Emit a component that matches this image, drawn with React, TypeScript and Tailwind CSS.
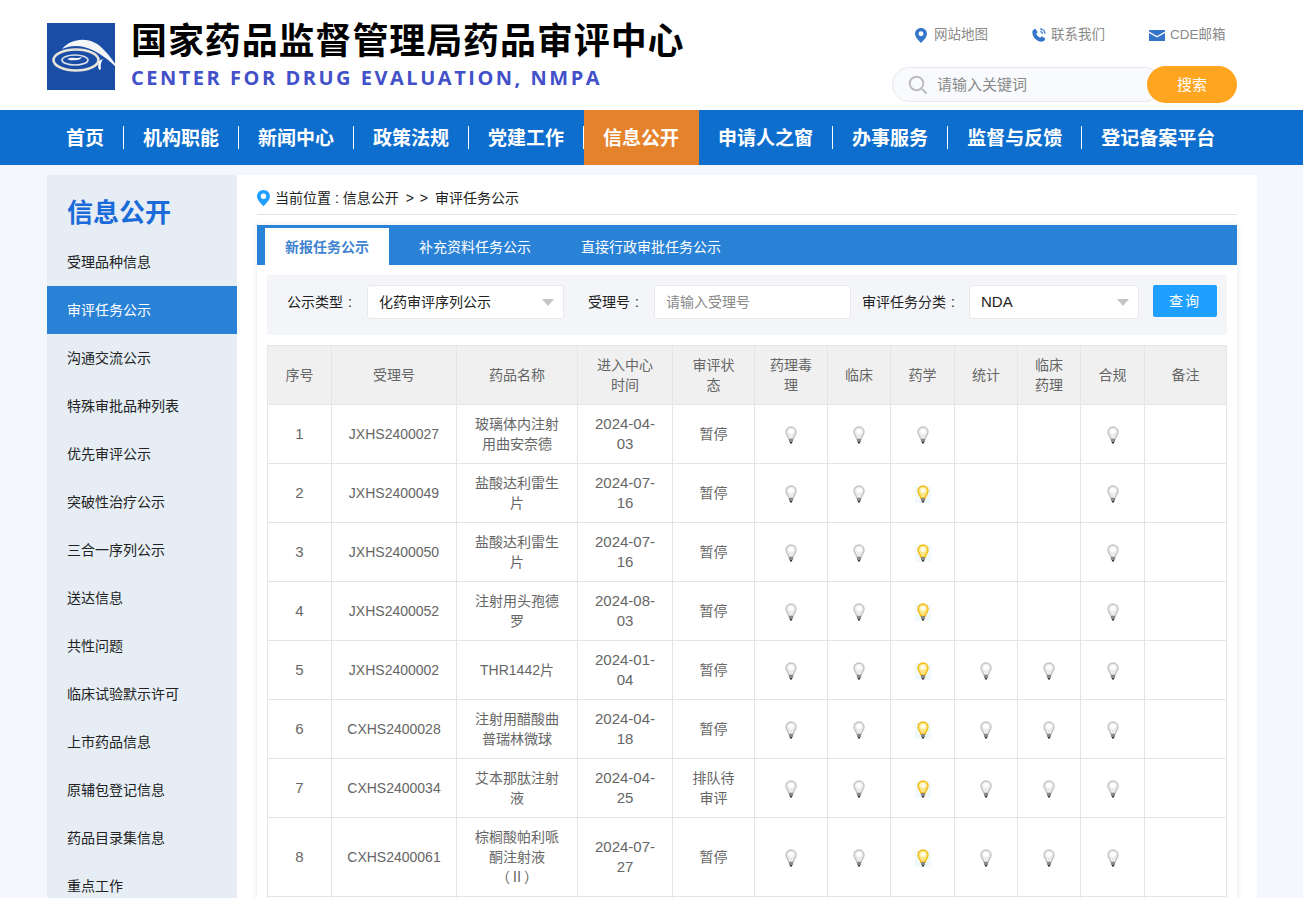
import React from "react";

const nav = ["首页", "机构职能", "新闻中心", "政策法规", "党建工作", "信息公开", "申请人之窗", "办事服务", "监督与反馈", "登记备案平台"];
const side = ["受理品种信息", "审评任务公示", "沟通交流公示", "特殊审批品种列表", "优先审评公示", "突破性治疗公示", "三合一序列公示", "送达信息", "共性问题", "临床试验默示许可", "上市药品信息", "原辅包登记信息", "药品目录集信息", "重点工作"];

type Row = { n: number; id: string; name: React.ReactNode; date: string; st: string; b: number[]; h?: boolean };
const rows: Row[] = [
  { n: 1, id: "JXHS2400027", name: "玻璃体内注射用曲安奈德", date: "2024-04-03", st: "暂停", b: [1, 1, 1, 0, 0, 1] },
  { n: 2, id: "JXHS2400049", name: "盐酸达利雷生片", date: "2024-07-16", st: "暂停", b: [1, 1, 2, 0, 0, 1] },
  { n: 3, id: "JXHS2400050", name: "盐酸达利雷生片", date: "2024-07-16", st: "暂停", b: [1, 1, 2, 0, 0, 1] },
  { n: 4, id: "JXHS2400052", name: "注射用头孢德罗", date: "2024-08-03", st: "暂停", b: [1, 1, 2, 0, 0, 1] },
  { n: 5, id: "JXHS2400002", name: "THR1442片", date: "2024-01-04", st: "暂停", b: [1, 1, 2, 1, 1, 1] },
  { n: 6, id: "CXHS2400028", name: "注射用醋酸曲普瑞林微球", date: "2024-04-18", st: "暂停", b: [1, 1, 2, 1, 1, 1] },
  { n: 7, id: "CXHS2400034", name: "艾本那肽注射液", date: "2024-04-25", st: "排队待审评", b: [1, 1, 2, 1, 1, 1] },
  { n: 8, id: "CXHS2400061", name: <>棕榈酸帕利哌酮注射液<br />（Ⅱ）</>, date: "2024-07-27", st: "暂停", b: [1, 1, 2, 1, 1, 1], h: true },
];

function Bulb({ on }: { on: boolean }) {
  const glass = on ? "#f2bd12" : "#c4c4c4";
  const inner = on ? "#fbe58a" : "#ececec";
  return (
    <svg width="16" height="18" viewBox="0 0 16 18" className="block mx-auto translate-y-[1px]">
      {on ? <rect x="0" y="1" width="16" height="17" fill="#f1f9fc" /> : null}
      <g transform="translate(1.500 0) scale(0.93 1)">
        <path d="M7 1C3.900 1 1.600 3.200 1.600 6c0 2.400 1.800 3.600 2.500 5.600.2.600.3 1 .4 1.400h5c.1-.4.2-.8.4-1.400C10.600 9.600 12.400 8.400 12.400 6 12.400 3.200 10.100 1 7 1z" fill={inner} stroke={glass} strokeWidth="1.500" />
        <ellipse cx="7" cy="5.500" rx="2.800" ry="2.400" fill={on ? "#fffbe6" : "#ffffff"} />
        <rect x="4.800" y="13" width="4.400" height="3" fill="#8a8a8a" />
        <rect x="5.800" y="16" width="2.400" height="1.500" fill="#333333" />
      </g>
    </svg>
  );
}

function Pin({ color, size = 14 }: { color: string; size?: number }) {
  return (
    <svg width={size} height={size * 1.25} viewBox="0 0 16 20" className="block shrink-0">
      <path d="M8 0C3.600 0 0 3.500 0 7.800 0 13.200 8 20 8 20s8-6.800 8-12.200C16 3.500 12.400 0 8 0zm0 11a3.300 3.300 0 1 1 0-6.600A3.300 3.300 0 0 1 8 11z" fill={color} />
    </svg>
  );
}

function Caret() {
  return <span className="ml-auto w-0 h-0 border-l-[6px] border-r-[6px] border-t-[7px] border-l-transparent border-r-transparent border-t-[#c4c4c4]" />;
}

const colClasses = ["w-[64px]", "w-[125px]", "w-[121px]", "w-[95px]", "w-[82px]", "w-[73px]", "w-[63px]", "w-[64px]", "w-[63px]", "w-[63px]", "w-[64px]", "w-[82px]"];
const heads = ["序号", "受理号", "药品名称", "进入中心时间", "审评状态", "药理毒理", "临床", "药学", "统计", "临床药理", "合规", "备注"];

export default function App() {
  return (
    <div className="h-[898px] overflow-hidden bg-[#f4f8fe] font-['Liberation_Sans','Noto_Sans_CJK_SC',sans-serif] text-[14px]">
      <header className="h-[110px] bg-white flex pl-[47px] pr-[66px]">
        <div className="mt-[23px] w-[68px] h-[67px] bg-[#1a4ea6] shrink-0">
          <svg width="68" height="67" viewBox="0 0 68 67" className="block overflow-visible">
            <path d="M15 26C24 15 44 12 57 27c6 6 10 12 15 20C62 37 50 27 37 24c-8-2-15-1-22 2z" fill="#f4f5f6" />
            <ellipse cx="29" cy="37" rx="22.500" ry="10.500" fill="none" stroke="#e8e4da" strokeWidth="2.600" />
            <ellipse cx="28" cy="37" rx="13" ry="5" fill="none" stroke="#dfe3ea" strokeWidth="1.600" />
            <path d="M20 36c4-2 8-1 11-1l4-1c-1 2-3 3-5 3-3 0-7 1-10-1z" fill="#f4f5f6" />
            <path d="M56 36c-4 1-6 5-4 11l2-1c-1-4 0-7 2-10z" fill="#ffffff" />
          </svg>
        </div>
        <div className="ml-[16px] shrink-0">
          <div className="mt-[19px] text-[36px] leading-[46px] font-bold tracking-[0.900px] text-black whitespace-nowrap">国家药品监督管理局药品审评中心</div>
          <div className="mt-[1px] text-[20px] leading-[24px] font-bold tracking-[2.520px] text-[#4250c9] whitespace-nowrap font-['Open_Sans',sans-serif]">CENTER FOR DRUG EVALUATION, NMPA</div>
        </div>
        <div className="ml-auto w-[345px] shrink-0">
          <div className="mt-[26px] h-[18px] flex items-center text-[13.500px] text-[#8a8a8a]">
            <span className="ml-[23px]"><Pin color="#3575c9" size={12} /></span>
            <span className="ml-[7px] w-[60px] whitespace-nowrap">网站地图</span>
            <svg width="16" height="16" viewBox="0 0 24 24" className="ml-[37px] block shrink-0">
              <path d="M6.600 2.500 10 8l-2.200 2.300c1 2.500 3.400 5 5.900 5.900L16 14l5.500 3.400c-.5 2.800-2.500 4.600-5 4.600C8.500 22 2 15.500 2 7.500c0-2.500 2-4.500 4.600-5z" fill="#3575c9" />
              <path d="M14 3a7 7 0 0 1 7 7M14 7a3 3 0 0 1 3 3" fill="none" stroke="#3575c9" strokeWidth="2" />
            </svg>
            <span className="ml-[4px] w-[54px] whitespace-nowrap">联系我们</span>
            <svg width="16" height="12" viewBox="0 0 16 12" className="ml-[44px] block shrink-0">
              <path d="M0 1h16v1.500L8 7 0 2.500zM0 4l8 4.500L16 4v8H0z" fill="#3575c9" />
            </svg>
            <span className="ml-[5px] whitespace-nowrap">CDE邮箱</span>
          </div>
          <div className="mt-[22px] relative h-[37px]">
            <div className="absolute left-0 top-[1px] w-[270px] h-[35px] rounded-full bg-[#f8fafd] border border-[#e6e8ec] flex items-center pl-[15px]">
              <svg width="20" height="20" viewBox="0 0 20 20" className="block shrink-0">
                <circle cx="8.500" cy="8.500" r="6.800" fill="none" stroke="#bdbdbd" strokeWidth="2" />
                <path d="M14 14l4.500 4.500" stroke="#bdbdbd" strokeWidth="2" />
              </svg>
              <span className="ml-[9px] pt-[2px] text-[15px] text-[#8a8a8a]">请输入关键词</span>
            </div>
            <div className="absolute right-0 top-0 w-[90px] h-[37px] pt-[2px] rounded-full bg-[#ffa520] text-[15px] text-white flex items-center justify-center">搜索</div>
          </div>
        </div>
      </header>

      <nav className="h-[55px] bg-[#0d6ecd] flex pl-[47px]">
        {nav.map((t, i) => (
          <div key={t} className={i === 5 ? "h-full bg-[#e5832c] flex items-center" : "h-full flex items-center"}>
            <span className={i === 9 ? "px-[19px] text-[19px] leading-[23px] font-bold text-white" : i === 5 ? "px-[19px] text-[19px] leading-[23px] font-bold text-white border-r border-transparent" : "px-[19px] text-[19px] leading-[23px] font-bold text-white border-r border-white"}>
              <span className="block translate-y-[1px]">{t}</span>
            </span>
          </div>
        ))}
      </nav>

      <div className="mt-[10px] mx-[47px] flex">
        <aside className="w-[190px] shrink-0 bg-[#e6edf5]">
          <div className="h-[63px] pl-[20px] pt-[18px] text-[26px] leading-[40px] font-bold text-[#1a6ad9]">信息公开</div>
          {side.map((t, i) => (
            <div key={t} className={i === 1 ? "h-[48px] pl-[20px] flex items-center bg-[#2a82d7] text-white" : "h-[48px] pl-[20px] flex items-center text-[#222222]"}>{t}</div>
          ))}
        </aside>
        <main className="w-[1020px] h-[800px] bg-white px-[20px]">
          <div className="h-[40px] border-b border-[#e5e5e5] flex items-center text-[14px] text-[#222222] pt-[7px]">
            <Pin color="#1f9fff" size={13} />
            <span className="ml-[5px]">当前位置 : 信息公开</span>
            <span className="ml-[7px]">&gt;</span>
            <span className="ml-[6px]">&gt;</span>
            <span className="ml-[7px]">审评任务公示</span>
          </div>
          <div className="mt-[10px] shadow-[0_0_6px_rgba(60,100,170,0.15)] h-[760px]">
            <div className="h-[40px] bg-[#2a82d7] flex items-end pl-[8px] text-[14px] text-white">
              <div className="h-[37px] pt-[2px] w-[124px] bg-white text-[#3f83d0] font-bold flex items-center justify-center">新报任务公示</div>
              <div className="h-[37px] pt-[2px] ml-[30px] flex items-center">补充资料任务公示</div>
              <div className="h-[37px] pt-[2px] ml-[50px] flex items-center">直接行政审批任务公示</div>
            </div>
            <div className="px-[10px] pt-[10px]">
              <div className="h-[60px] bg-[#f3f5f9] flex items-start pt-[10px] pl-[20px] text-[#222222]">
                <span className="h-[34px] w-[80px] flex items-center whitespace-nowrap">公示类型<span className="ml-[5px]">:</span></span>
                <div className="w-[197px] h-[34px] bg-white border border-[#e8e8e8] rounded-[3px] flex items-center pl-[11px] pr-[9px]">化药审评序列公示<Caret /></div>
                <span className="ml-[24px] h-[34px] w-[66px] flex items-center whitespace-nowrap">受理号<span className="ml-[5px]">:</span></span>
                <div className="w-[197px] h-[34px] bg-white border border-[#e8e8e8] rounded-[3px] flex items-center pl-[11px] text-[#8a8a8a]">请输入受理号</div>
                <span className="ml-[11px] h-[34px] w-[107px] flex items-center whitespace-nowrap">审评任务分类<span className="ml-[5px]">:</span></span>
                <div className="w-[170px] h-[34px] bg-white border border-[#e8e8e8] rounded-[3px] flex items-center pl-[11px] pr-[9px] text-[15px]">NDA<Caret /></div>
                <div className="ml-[14px] w-[64px] h-[32px] bg-[#1f9fff] rounded-[2px] text-white flex items-center justify-center tracking-[2px]">查询</div>
              </div>
              <table className="mt-[10px] w-[960px] table-fixed border-collapse text-[#666666] text-center leading-[20px]">
                <colgroup>
                  {colClasses.map((c, i) => <col key={i} className={c} />)}
                </colgroup>
                <thead>
                  <tr className="bg-[#f0f0f0]">
                    {heads.map((h) => <th key={h} className="h-[59px] px-[15px] border border-[#e5e5e5] font-normal">{h}</th>)}
                  </tr>
                </thead>
                <tbody>
                  {rows.map((r) => (
                    <tr key={r.n}>
                      <td className={r.h ? "h-[79px] px-[15px] border border-[#e5e5e5] text-[15px]" : "h-[59px] px-[15px] border border-[#e5e5e5] text-[15px]"}>{r.n}</td>
                      <td className="px-[10px] border border-[#e5e5e5]">{r.id}</td>
                      <td className="px-[15px] border border-[#e5e5e5]">{r.name}</td>
                      <td className="px-[15px] border border-[#e5e5e5] text-[15px]">{r.date}</td>
                      <td className="px-[15px] border border-[#e5e5e5]">{r.st}</td>
                      {r.b.map((b, i) => (
                        <td key={i} className="border border-[#e5e5e5]">{b ? <Bulb on={b === 2} /> : null}</td>
                      ))}
                      <td className="border border-[#e5e5e5]" />
                    </tr>
                  ))}
                  <tr>
                    {heads.map((h) => <td key={h} className="h-[59px] border border-[#e5e5e5]" />)}
                  </tr>
                </tbody>
              </table>
            </div>
          </div>
        </main>
      </div>
    </div>
  );
}
